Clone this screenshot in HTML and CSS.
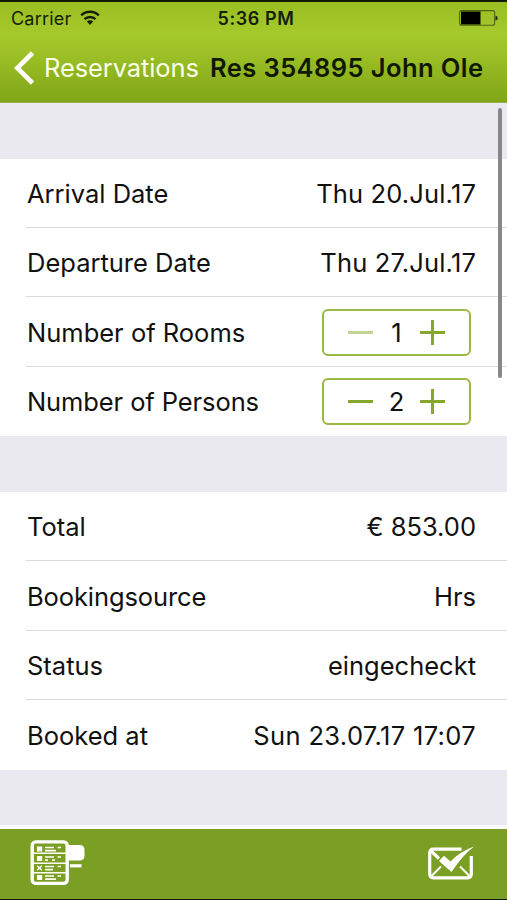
FILE: index.html
```html
<!DOCTYPE html>
<html lang="en">
<head>
<meta charset="utf-8">
<title>Reservation</title>
<link rel="stylesheet" href="styles.css">
</head>
<body>
<div class="screen">
  <header class="header">
    <div class="status">
      <div class="carrier"><span>Carrier</span>
        <svg class="wifi" width="20" height="15" viewBox="0 0 20 15"><g fill="none" stroke="#14200a" stroke-width="2.500"><path d="M1.2 5.400a12.500 12.500 0 0 1 17.600 0"/><path d="M4.500 9.200a7.800 7.800 0 0 1 11 0"/></g><path d="M6.800 11.600a4.600 4.600 0 0 1 6.400 0L10 15z" fill="#14200a"/></svg>
      </div>
      <span class="time">5:36 PM</span>
      <svg class="battery" width="39" height="16" viewBox="0 0 39 16"><rect x=".6" y=".6" width="35" height="14.6" rx="2" fill="none" stroke="#4e6614" stroke-width="1.1"/><path d="M2 1.5h19.500v13H2z" fill="#000"/><path d="M36.500 5.500q2.200.5 2.200 2.500t-2.200 2.500z" fill="#1d280a"/></svg>
    </div>
    <nav class="nav">
      <svg class="back" width="21" height="34" viewBox="0 0 21 34"><path d="M18.500 2L3.200 17l15.300 15" fill="none" stroke="#fff" stroke-width="4.600"/></svg>
      <span class="back-label">Reservations</span>
      <h1 class="title">Res 354895 John Ole</h1>
    </nav>
  </header>
  <main class="content">
    <section class="group">
      <div class="row"><span>Arrival Date</span><span class="date">Thu 20.Jul.17</span></div>
      <div class="row"><span>Departure Date</span><span class="date">Thu 27.Jul.17</span></div>
      <div class="row"><span>Number of Rooms</span>
        <div class="stepper"><i class="minus off"></i><b>1</b><i class="plus"></i></div></div>
      <div class="row"><span class="narrow">Number of Persons</span>
        <div class="stepper"><i class="minus"></i><b>2</b><i class="plus"></i></div></div>
    </section>
    <section class="group">
      <div class="row"><span>Total</span><span>€ 853.00</span></div>
      <div class="row"><span class="narrow">Bookingsource</span><span>Hrs</span></div>
      <div class="row"><span>Status</span><span>eingecheckt</span></div>
      <div class="row"><span>Booked at</span><span class="datetime">Sun 23.07.17 17:07</span></div>
    </section>
    <div class="scrollbar"></div>
  </main>
  <footer class="toolbar">
    <svg width="56" height="46" viewBox="0 0 56 46">
      <path d="M37 5h12.500q5 0 5 5v5.500q0 5-5 5H37z" fill="#fff"/><path d="M40 24.200h11.500v3.200H40z" fill="#fff"/>
      <rect x="2.200" y="1.900" width="35" height="41.500" rx="3.500" fill="#7b9f25" stroke="#fff" stroke-width="3.400"/>
      <path d="M3 13.300h33M3 23.300h33M3 32.800h33" stroke="#fff" stroke-width="1.600"/>
      <path d="M7 6.500h5.200v5H7zM7 16h5.200v5H7zM7 35h5.200v5H7z" fill="#fff"/>
      <path d="M7.200 25.700l4.600 4.600m0-4.600l-4.600 4.600" stroke="#fff" stroke-width="1.300"/>
      <path d="M15 7.500h9m3.500 0h3.500M15 10.700h11M15 17h9m3.500 0h3.500M15 20.200h3m4 0h3M15 26.500h9m3.500 0h3.500M15 29.700h8M15 36h9m3.500 0h3.500M15 39.200h11" stroke="#fff" stroke-width="1.700"/>
    </svg>
    <svg width="46" height="34" viewBox="0 0 46 34">
      <g fill="none" stroke="#fff"><path d="M33.500 3.200h-28Q1.700 3.200 1.700 7v21q0 3.800 3.800 3.800h34q3.800 0 3.800-3.800V10" stroke-width="3.200"/><path d="M3 5l8 7.500" stroke-width="3.200"/><path d="M4 29.500l9-9M41 29.500L32 20.500" stroke-width="2"/></g>
      <path d="M11 15l5-5.200 6.500 5.700Q32 5.500 46 0.500 34 10 23.500 26z" fill="#fff"/>
    </svg>
  </footer>
</div>
</body>
</html>
```
FILE: styles.css
```css
* { box-sizing: border-box; }
body { margin: 0; font-family: Inter, "Liberation Sans", sans-serif; color: #111; }
.screen { width: 507px; height: 900px; display: flex; flex-direction: column; overflow: hidden; border-bottom: 1px solid #10140a; }
.header { height: 103px; border-top: 2px solid #111b04; border-bottom: 1px solid #8fae48; background: linear-gradient(#9abd22, #a5ca2b 32%, #9dc126 50%, #80a518); }
.status { height: 32px; display: grid; grid-template-columns: 1fr auto 1fr; align-items: center; padding: 0 9px 0 11px; font-size: 18px; color: #14200a; }
.carrier { display: flex; align-items: center; gap: 9px; letter-spacing: .2px; }
.wifi { margin-top: -2px; }
.time { padding-left: 3px; font-weight: 600; font-size: 18px; letter-spacing: .6px; }
.battery { justify-self: end; }
.nav { height: 67px; display: flex; align-items: center; padding-left: 14px; white-space: nowrap; }
.back-label { margin-left: 9px; width: 166px; font-size: 25.500px; letter-spacing: -.1px; color: #fbffe9; }
.title { margin: 0; font-size: 25.500px; font-weight: 600; letter-spacing: .42px; color: #101803; }
.content { height: 726px; position: relative; background: #eae9ef; border-bottom: 4px solid #fdfdfd; overflow: hidden; }
.group { margin-top: 55.500px; background: #fff; padding-left: 26px; }
.row { height: 69.450px; display: flex; align-items: center; justify-content: space-between; padding: 1.500px 31px 0 1px; font-size: 25.500px; border-bottom: 1px solid #d9d9dc; }
.row:last-child { border-bottom-color: transparent; }
.date { letter-spacing: .15px; }
.datetime { letter-spacing: .35px; }
.narrow { letter-spacing: -.1px; }
.stepper { width: 149px; height: 47px; margin-right: 5px; padding: 0 24px; border: 2px solid #9ab845; border-radius: 6px; display: flex; align-items: center; justify-content: space-between; }
.stepper b { font-weight: 400; }
.minus, .plus { width: 25px; height: 25px; background: linear-gradient(#86a72c, #86a72c) center / 25px 3px no-repeat; }
.plus { background: linear-gradient(#86a72c, #86a72c) center / 25px 3px no-repeat, linear-gradient(#86a72c, #86a72c) center / 3px 25px no-repeat; }
.off { opacity: .5; }
.scrollbar { position: absolute; right: 5px; top: 5px; width: 4px; height: 270px; border-radius: 2px; background: #87878a; }
.toolbar { height: 70px; background: #7b9f25; display: flex; align-items: center; justify-content: space-between; padding: 0 33px 2px 30px; }
```
